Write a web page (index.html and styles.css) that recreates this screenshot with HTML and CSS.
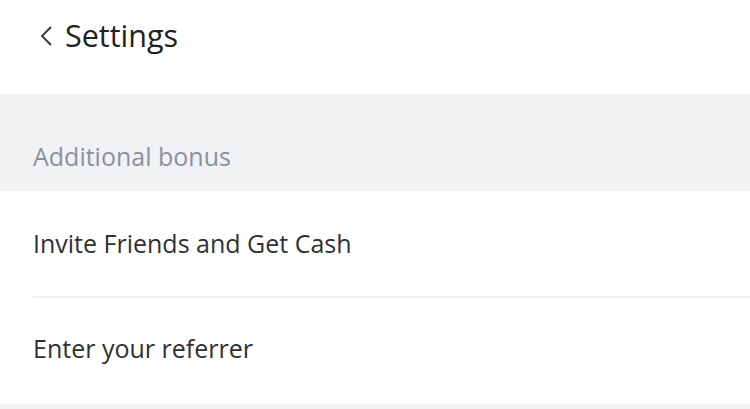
FILE: index.html
```html
<!DOCTYPE html>
<html>
<head>
<meta charset="utf-8">
<link rel="stylesheet" href="styles.css">
</head>
<body>
<header class="topbar">
  <svg class="back" width="14" height="22" viewBox="0 0 14 22"><path d="M12 2 L3 11 L12 20" fill="none" stroke="#333" stroke-width="1.8"/></svg>
  <h1 class="title">Settings</h1>
</header>
<div class="section-head">Additional bonus</div>
<ul class="list">
  <li class="item">Invite Friends and Get Cash</li>
  <li class="item">Enter your referrer</li>
</ul>
<div class="footer-band"></div>
</body>
</html>
```
FILE: styles.css
```css
html, body { margin: 0; padding: 0; background: #fff; }
body { font-family: "Open Sans", "Noto Sans", sans-serif; color: #2f3033; width: 750px; height: 409px; overflow: hidden; }
.topbar { height: 94px; display: flex; align-items: center; padding-left: 39px; box-sizing: border-box; padding-bottom: 24px; }
.back { margin-right: 12px; margin-top: 2px; }
.title { margin: 0; font-size: 30.5px; font-weight: 400; color: #222; line-height: 40px; }
.section-head { height: 97px; background: #f1f2f4; color: #8b9199; font-size: 25px; padding-left: 33px; box-sizing: border-box; padding-top: 46px; line-height: 32px; }
.list { list-style: none; margin: 0; padding: 0 0 0 33px; }
.item { height: 105px; display: flex; align-items: center; font-size: 25px; box-sizing: border-box; padding-bottom: 2px; }
.item + .item { border-top: 2px solid #f0f1f3; height: 108px; padding-bottom: 6px; }
.footer-band { height: 5px; background: #f1f2f4; }
```
